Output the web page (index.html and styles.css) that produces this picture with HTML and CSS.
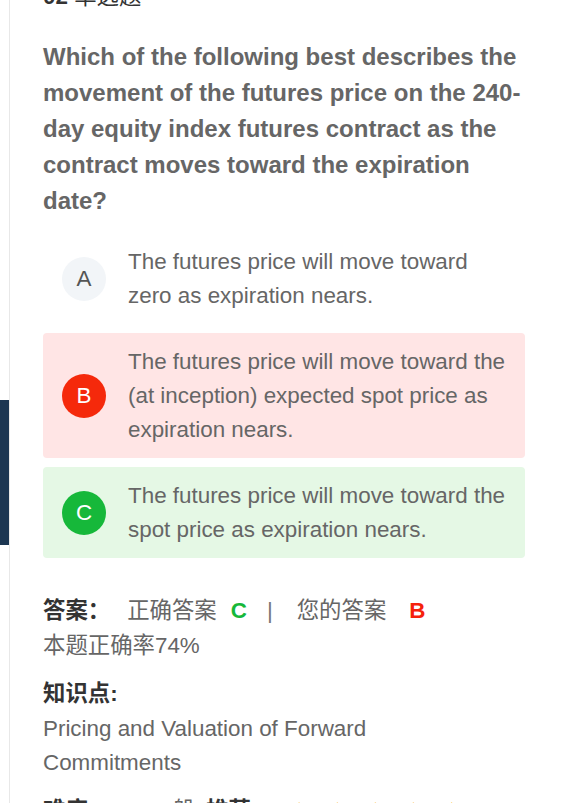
FILE: index.html
```html
<!DOCTYPE html>
<html lang="zh-CN">
<head>
  <meta charset="UTF-8" />
  <meta name="viewport" content="width=device-width, initial-scale=1" />
  <title>单选题</title>
  <link rel="stylesheet" href="styles.css">
</head>
<body>
  <div class="side-tab"></div>

  <div class="page">
    <div class="q-head"><b>02</b> 单选题</div>

    <div class="q-text">Which of the following best describes the movement of the futures price on the 240-day equity index futures contract as the contract moves toward the expiration date?</div>

    <ul class="options">
      <li class="option">
        <span class="letter">A</span>
        <span class="opt-text">The futures price will move toward zero as expiration nears.</span>
      </li>
      <li class="option wrong">
        <span class="letter">B</span>
        <span class="opt-text">The futures price will move toward the (at inception) expected spot price as expiration nears.</span>
      </li>
      <li class="option right">
        <span class="letter">C</span>
        <span class="opt-text">The futures price will move toward the spot price as expiration nears.</span>
      </li>
    </ul>

    <div class="answer">
      <div>
        <b class="label">答案：</b><span class="ans-item">正确答案</span><b class="ans-ok">C</b><span class="sep">|</span><span class="ans-item mine">您的答案</span><b class="ans-bad">B</b>
      </div>
      <div>本题正确率74%</div>
    </div>

    <div class="point">
      <b class="label">知识点:</b>
      <div class="point-name">Pricing and Valuation of Forward Commitments</div>
    </div>

    <div class="meta">
      <b class="label">难度：</b><span class="level">一般</span>
      <b class="label">推荐：</b><span class="stars">★★★★★</span>
    </div>
  </div>
</body>
</html>
```

FILE: styles.css
```css
* {
  box-sizing: border-box;
  margin: 0;
  padding: 0;
}
body {
  background: #fff;
  font-family: "Liberation Sans", "Noto Sans CJK SC", sans-serif;
  font-size: 22.4px;
  line-height: 34px;
  color: #666;
}
.side-tab {
  position: fixed;
  left: 0;
  top: 400px;
  width: 9px;
  height: 145px;
  background: #1c3652;
}
.page {
  display: flow-root;
  margin-left: 9px;
  min-height: 100vh;
  border-left: 1px solid #e8e8e8;
  padding: 0 43px 40px 33px;
}
.q-head {
  margin-top: -20px;
  color: #333;
}
.q-text {
  margin-top: 25px;
  font-size: 24px;
  line-height: 36px;
  font-weight: 700;
  color: #666;
}
.options {
  list-style: none;
  margin-top: 14px;
  display: flex;
  flex-direction: column;
  gap: 9px;
}
.option {
  display: flex;
  align-items: center;
  padding: 11.5px 14px 11.5px 19px;
  border-radius: 4px;
}
.letter {
  flex: none;
  width: 44px;
  height: 44px;
  border-radius: 50%;
  background: #f2f5f8;
  color: #555;
  display: flex;
  align-items: center;
  justify-content: center;
  margin-right: 22px;
}
.wrong {
  background: #ffe5e5;
}
.wrong .letter {
  background: #f5290b;
  color: #fff;
}
.right {
  background: #e5f8e5;
}
.right .letter {
  background: #16b83a;
  color: #fff;
}
.answer {
  margin-top: 35px;
  line-height: 35px;
}
.label {
  color: #333;
  font-weight: 700;
}
.ans-item {
  margin-left: 17px;
}
.ans-item.mine {
  margin-left: 24px;
}
.ans-ok {
  color: #16b83a;
  margin-left: 14px;
}
.ans-bad {
  color: #f5220b;
  margin-left: 23px;
}
.sep {
  margin-left: 20px;
  color: #777;
}
.point {
  margin-top: 14px;
  line-height: 34.5px;
}
.point-name {
  max-width: 440px;
}
.meta {
  margin-top: 12px;
}
.level {
  margin: 0 5px 0 40px;
}
.stars {
  margin-left: 16px;
  color: #fcb515;
  font-family: "DejaVu Sans", sans-serif;
  letter-spacing: 18px;
}
```
